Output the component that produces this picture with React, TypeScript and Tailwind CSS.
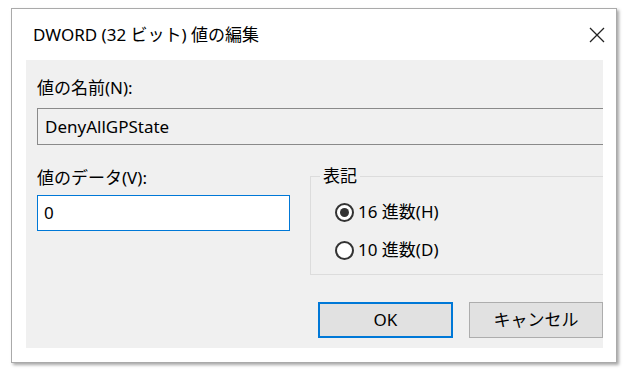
const font = { fontFamily: '"Noto Sans", "Noto Sans CJK JP", sans-serif' };

function Radio({ checked, label }: { checked?: boolean; label: string }) {
  return (
    <div className="flex items-center h-[24px]">
      <span className="w-[19px] h-[19px] rounded-full border-2 border-[#333333] bg-white flex items-center justify-center">
        {checked && <span className="w-[9px] h-[9px] rounded-full bg-[#333333]" />}
      </span>
      <span className="ml-[4px] text-[17px] leading-[24px]">{label}</span>
    </div>
  );
}

export default function App() {
  return (
    <div className="w-[629px] h-[377px] bg-white pt-[8px] pl-[11px] text-black" style={font}>
      <div className="w-[606px] h-[355px] bg-white border border-[#aaaaaa] shadow-[2px_2px_3px_rgba(0,0,0,0.35)] flex flex-col">
        {/* title bar */}
        <div className="h-[51px] flex items-center justify-between pl-[21px] pr-[11px]">
          <div className="text-[17px] leading-[24px]">DWORD (32 ビット) 値の編集</div>
          <svg width="16" height="16" viewBox="0 0 16 16" className="text-[#222222]">
            <path d="M1 1L15 15M15 1L1 15" stroke="currentColor" strokeWidth="1.3" fill="none" />
          </svg>
        </div>

        {/* body */}
        <div className="ml-[14px] mr-[13px] h-[288px] bg-[#f0f0f0] overflow-hidden pt-[18px] pl-[11px]">
          <div className="text-[17px] leading-[20px]">値の名前(N):</div>
          <div className="mt-[10px] w-[600px] h-[37px] border border-[#8a8a8a] bg-[#f0f0f0] flex items-center pl-[7px] text-[17px]">
            DenyAllGPState
          </div>

          <div className="mt-[21px] flex">
            <div className="w-[253px] shrink-0">
              <div className="text-[17px] leading-[24px]">値のデータ(V):</div>
              <div className="mt-[5px] h-[36px] border border-[#0078d7] bg-white flex items-center pl-[6px] text-[17px]">
                0
              </div>
            </div>

            <fieldset className="ml-[20px] w-[340px] shrink-0 h-[109px] border border-[#dcdcdc]">
              <legend className="ml-[9px] px-[3px] text-[17px] leading-[20px]">表記</legend>
              <div className="mt-[14px] pl-[24px] flex flex-col gap-[14px]">
                <Radio checked label="16 進数(H)" />
                <Radio label="10 進数(D)" />
              </div>
            </fieldset>
          </div>

          <div className="mt-[27px] flex justify-end gap-[16px]">
            <button className="w-[135px] h-[36px] bg-[#e1e1e1] border-2 border-[#0078d7] text-[17px]">OK</button>
            <button className="w-[134px] h-[36px] bg-[#e1e1e1] border border-[#adadad] text-[17px]">キャンセル</button>
          </div>
        </div>
      </div>
    </div>
  );
}
